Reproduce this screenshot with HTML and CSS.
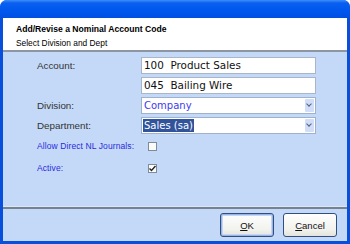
FILE: index.html
```html
<!DOCTYPE html>
<html lang="en">
<head>
    <meta charset="UTF-8">
    <title>Add/Revise a Nominal Account Code</title>
    <link rel="stylesheet" href="styles.css">
</head>
<body>
    <div class="window">
        <div class="titlebar"></div>

        <div class="header">
            <div class="title">Add/Revise a Nominal Account Code</div>
            <div class="subtitle">Select Division and Dept</div>
        </div>

        <div class="content">
            <div class="form">
                <div class="row">
                    <span class="label">Account:</span>
                    <span class="field">100&nbsp;&nbsp;Product Sales</span>
                </div>
                <div class="row">
                    <span class="label"></span>
                    <span class="field">045&nbsp;&nbsp;Bailing Wire</span>
                </div>
                <div class="row">
                    <span class="label">Division:</span>
                    <span class="field select"><span class="value blue">Company</span><span class="arrow"></span></span>
                </div>
                <div class="row">
                    <span class="label">Department:</span>
                    <span class="field select"><span class="value picked">Sales (sa)</span><span class="arrow"></span></span>
                </div>
                <div class="row check-row">
                    <span class="label small">Allow Direct NL Journals:</span>
                    <span class="check"></span>
                </div>
                <div class="row check-row">
                    <span class="label small">Active:</span>
                    <span class="check checked">
                        <svg width="7" height="7" viewBox="0 0 7 7"><path d="M0.5 3.5 L2.5 5.5 L6.5 1" fill="none" stroke="#222" stroke-width="1.4"/></svg>
                    </span>
                </div>
            </div>

            <div class="footer">
                <button class="btn default"><u>O</u>K</button>
                <button class="btn"><u>C</u>ancel</button>
            </div>
        </div>
    </div>
</body>
</html>
```

FILE: styles.css
```css
body {
    margin: 0;
    padding: 0;
    font-family: 'Liberation Sans', Arial, sans-serif;
}

.window {
    width: 350px;
    height: 244px;
    box-sizing: border-box;
    display: flex;
    flex-direction: column;
    background: #0850dc;
    border-radius: 7px 7px 0 0;
    padding: 0 3px 3px 3px;
    overflow: hidden;
}

.titlebar {
    height: 18px;
    margin: 0 -3px;
    background: linear-gradient(#3d8ff8 0px, #0a5ff0 3px, #0058ee 10px, #0050e2 18px);
}

.header {
    background: #ffffff;
    height: 34px;
    box-sizing: border-box;
    padding: 6px 0 0 13px;
    border-bottom: 2px solid #8d96a3;
}

.title {
    font-weight: bold;
    font-size: 8.6px;
    color: #000;
    height: 13px;
}

.subtitle {
    font-size: 8.4px;
    color: #000;
    margin-top: 1px;
}

.content {
    flex: 1;
    display: flex;
    flex-direction: column;
    background: #c4d9f7;
}

.form {
    padding: 5px 0 0 34px;
    display: flex;
    flex-direction: column;
    gap: 3px;
}

.row {
    display: flex;
    align-items: center;
    height: 17px;
}

.check-row {
    height: 18px;
}

.check-row + .check-row {
    margin-top: 1px;
}

.label {
    width: 104px;
    font-size: 9.8px;
    color: #333;
}

.label.small {
    font-size: 8.5px;
    color: #2a2ae0;
    letter-spacing: 0.1px;
}

.field {
    width: 175px;
    height: 17px;
    box-sizing: border-box;
    background: #fff;
    border: 1px solid #a8b6c8;
    font-family: 'DejaVu Sans', Verdana, sans-serif;
    font-size: 10.4px;
    color: #111;
    padding-left: 2px;
    line-height: 15px;
    white-space: nowrap;
}

.select {
    display: flex;
    align-items: center;
    justify-content: space-between;
    padding-left: 0;
    border-color: #9fb2cd;
    font-size: 10px;
}

.value {
    padding: 0 1px;
    line-height: 13px;
    margin-left: 1px;
}

.blue {
    color: #3c3cf0;
}

.picked {
    background: #31539c;
    color: #fff;
}

.arrow {
    width: 9px;
    height: 13px;
    margin-right: 1px;
    background: #d2def7;
    border-radius: 1px;
    position: relative;
}

.arrow::after {
    content: '';
    position: absolute;
    left: 2px;
    top: 3px;
    width: 3px;
    height: 3px;
    border-right: 1.3px solid #4d6185;
    border-bottom: 1.3px solid #4d6185;
    transform: rotate(45deg);
}

.check {
    width: 9px;
    height: 9px;
    margin-left: 7px;
    box-sizing: border-box;
    border: 1px solid #7f8b99;
    background: #fbfbf8;
    display: flex;
    align-items: center;
    justify-content: center;
}

.footer {
    margin-top: auto;
    border-top: 2px solid #75838f;
    box-shadow: 0 -1px 0 #dbe6f6;
    display: flex;
    justify-content: flex-end;
    gap: 9px;
    padding: 4px 10px 4px 0;
}

.btn {
    width: 54px;
    height: 24px;
    font-family: 'Liberation Sans', Arial, sans-serif;
    font-size: 9.5px;
    color: #111;
    background: linear-gradient(#fefefe, #f2f2ee 70%, #e4e3dc);
    border: 1px solid #2f4f7f;
    border-radius: 3px;
    padding: 0;
}

.btn.default {
    box-shadow: inset 0 0 0 1px #98b4e8, inset 0 0 0 2px #c6d6f4;
}
```
